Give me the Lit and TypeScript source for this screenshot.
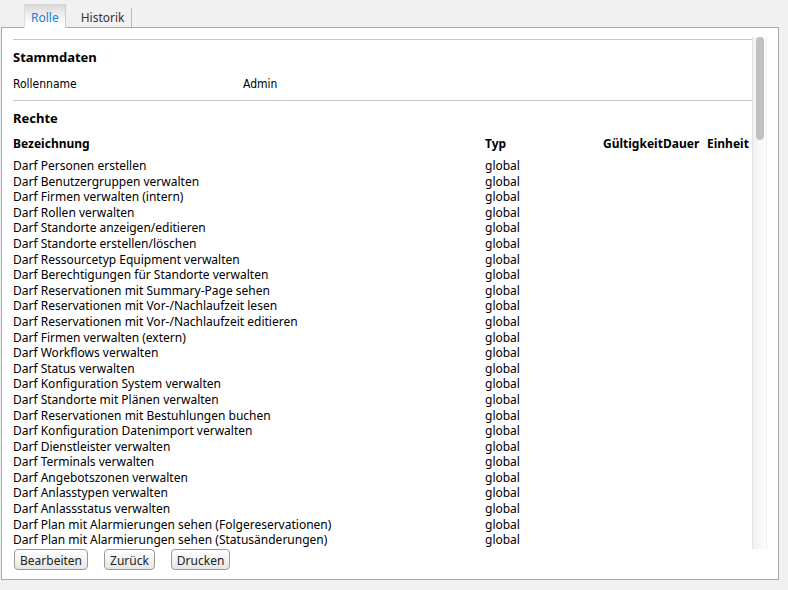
import { LitElement, html, css } from "lit";
import { customElement, state } from "lit/decorators.js";
import { classMap } from "lit/directives/class-map.js";

const RIGHTS = [
  "Darf Personen erstellen",
  "Darf Benutzergruppen verwalten",
  "Darf Firmen verwalten (intern)",
  "Darf Rollen verwalten",
  "Darf Standorte anzeigen/editieren",
  "Darf Standorte erstellen/löschen",
  "Darf Ressourcetyp Equipment verwalten",
  "Darf Berechtigungen für Standorte verwalten",
  "Darf Reservationen mit Summary-Page sehen",
  "Darf Reservationen mit Vor-/Nachlaufzeit lesen",
  "Darf Reservationen mit Vor-/Nachlaufzeit editieren",
  "Darf Firmen verwalten (extern)",
  "Darf Workflows verwalten",
  "Darf Status verwalten",
  "Darf Konfiguration System verwalten",
  "Darf Standorte mit Plänen verwalten",
  "Darf Reservationen mit Bestuhlungen buchen",
  "Darf Konfiguration Datenimport verwalten",
  "Darf Dienstleister verwalten",
  "Darf Terminals verwalten",
  "Darf Angebotszonen verwalten",
  "Darf Anlasstypen verwalten",
  "Darf Anlassstatus verwalten",
  "Darf Plan mit Alarmierungen sehen (Folgereservationen)",
  "Darf Plan mit Alarmierungen sehen (Statusänderungen)",
];

@customElement("app-root")
export class AppRoot extends LitElement {
  @state() private tab = "Rolle";

  static styles = css`
    :host {
      display: flex;
      flex-direction: column;
      box-sizing: border-box;
      min-height: 100vh;
      padding: 4px 9px 10px 1px;
      background: #f1f1f1;
      color: #000;
      font-family: "Noto Sans", "DejaVu Sans", sans-serif;
      font-size: 12px;
      line-height: 1.3;
    }
    .tabs {
      display: flex;
      position: relative;
      height: 24px;
      margin: 0 0 -1px 23px;
    }
    .tab {
      font: inherit;
      color: #333;
      border: 0;
      background: none;
      margin: 4px 0 1px;
      padding: 0 7px 0 15px;
      border-right: 1px solid #bbb;
    }
    .tab.active {
      margin: 0;
      padding: 3px 6px 0;
      color: #1c7fd6;
      border-right: 1px solid #ccc;
      border-left: 1px solid #ddd;
      background: linear-gradient(#d8d8d8, #fff 80%);
    }
    .panel {
      flex: 1;
      display: flex;
      flex-direction: column;
      border: 1px solid #a9a9ad;
      background: #fff;
      padding: 9px 11px 9px;
    }
    .view {
      flex: 1;
      display: flex;
    }
    .content {
      flex: 1;
      min-width: 0;
    }
    .section {
      border-top: 1px solid #c8c8c8;
    }
    .first {
      margin-top: 2px;
    }
    h2 {
      margin: 0;
      padding-top: 9px;
      font-size: 13px;
      line-height: 17px;
    }
    dl {
      display: grid;
      grid-template-columns: 230px 1fr;
      margin: 0;
      padding: 11px 0 8px;
      font-family: "DejaVu Sans Condensed", "DejaVu Sans", sans-serif;
      font-stretch: condensed;
      line-height: 15px;
    }
    dd {
      margin: 0;
    }
    table {
      width: 100%;
      table-layout: fixed;
      border-collapse: collapse;
    }
    .typ {
      width: 118px;
    }
    .gueltig {
      width: 60px;
    }
    .dauer {
      width: 44px;
    }
    .einheit {
      width: 45px;
    }
    th,
    td {
      padding: 0;
      text-align: left;
      white-space: nowrap;
    }
    th {
      line-height: 16px;
      padding: 9px 0 6px;
    }
    .track {
      width: 15px;
      box-sizing: border-box;
      padding: 0 3px;
      border-left: 1px solid #e2e2e2;
      border-right: 1px solid #eee;
      background: linear-gradient(to right, #f1f1f1, #fdfdfd);
    }
    .thumb {
      width: 8px;
      height: 103px;
      border-radius: 4px;
      background: #c1c1c1;
    }
    .actions {
      display: flex;
      gap: 16px;
      padding-left: 1px;
    }
    .action {
      font: inherit;
      color: #222;
      height: 21px;
      padding: 2px 5px 0;
      border: 1px solid #9a9a9a;
      border-radius: 4px;
      background: linear-gradient(#fff, #e6e6e6);
    }
  `;

  render() {
    return html`
      <div class="tabs" role="tablist">
        ${["Rolle", "Historik"].map(
          (name) => html`<button
            role="tab"
            aria-selected=${name === this.tab ? "true" : "false"}
            class=${classMap({ tab: true, active: name === this.tab })}
            @click=${() => (this.tab = name)}
          >${name}</button>`
        )}
      </div>
      <main class="panel">
        <div class="view">
          <div class="content">
            <section class="section first">
              <h2>Stammdaten</h2>
              <dl>
                <dt>Rollenname</dt>
                <dd>Admin</dd>
              </dl>
            </section>
            <section class="section">
              <h2>Rechte</h2>
              <table>
                <thead>
                  <tr>
                    <th>Bezeichnung</th>
                    <th class="typ">Typ</th>
                    <th class="gueltig">Gültigkeit</th>
                    <th class="dauer">Dauer</th>
                    <th class="einheit">Einheit</th>
                  </tr>
                </thead>
                <tbody>
                  ${RIGHTS.map(
                    (right) => html`<tr>
                      <td>${right}</td>
                      <td>global</td>
                      <td></td>
                      <td></td>
                      <td></td>
                    </tr>`
                  )}
                </tbody>
              </table>
            </section>
          </div>
          <div class="track"><div class="thumb"></div></div>
        </div>
        <div class="actions">
          ${["Bearbeiten", "Zurück", "Drucken"].map(
            (label) => html`<button class="action">${label}</button>`
          )}
        </div>
      </main>
    `;
  }
}
